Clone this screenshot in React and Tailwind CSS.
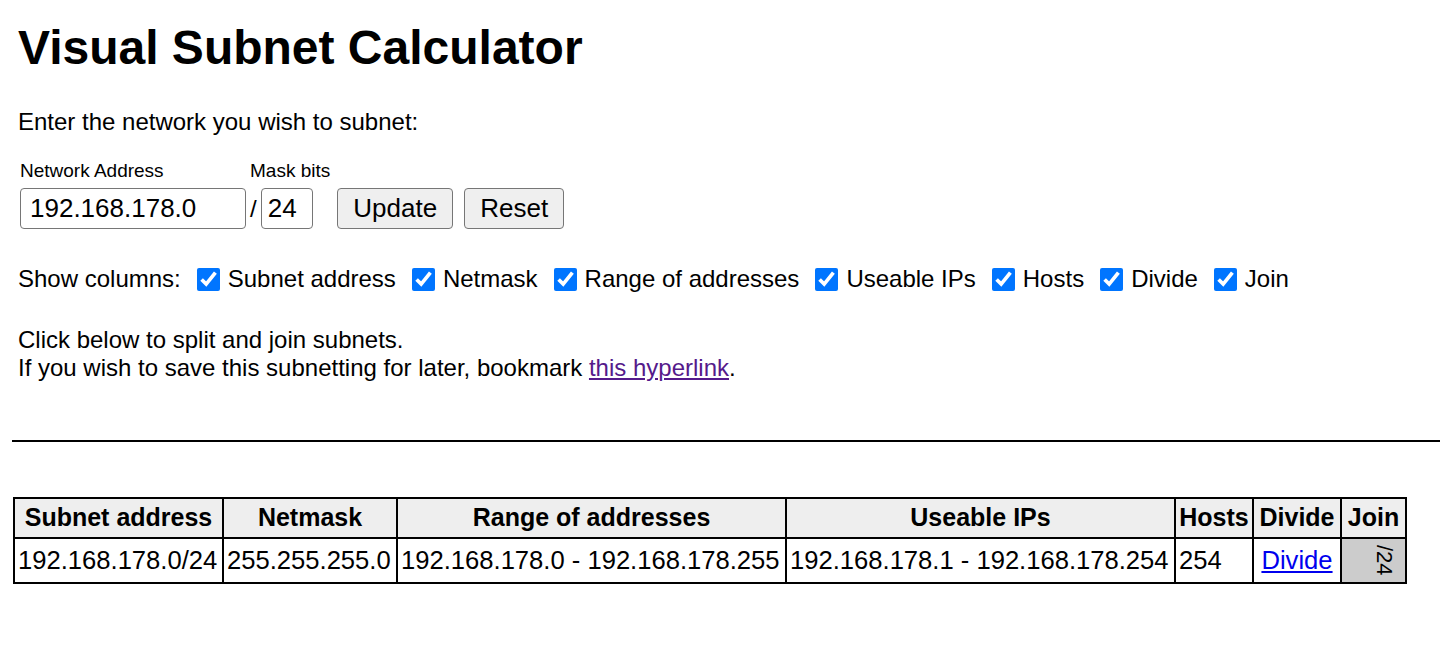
import React from 'react';

const columns = [
  ['Subnet address', 209],
  ['Netmask', 174],
  ['Range of addresses', 389],
  ['Useable IPs', 389],
  ['Hosts', 78],
  ['Divide', 88],
  ['Join', 65],
];

const Check = ({ label }) => (
  <label className="flex items-center ml-[16px]">
    <input type="checkbox" defaultChecked className="w-[23px] h-[23px] m-0 mr-[8px] accent-[#0075ff]" />
    <span>{label}</span>
  </label>
);

const App = () => (
  <div className="min-h-screen bg-white text-black flex flex-col pl-[12px] font-['Liberation_Sans',Arial,sans-serif]">
    <h1 className="mt-[20px] pl-[6px] text-[48px] leading-[56px] font-bold">Visual Subnet Calculator</h1>

    <p className="mt-[32px] pl-[6px] text-[24px] leading-[28px]">Enter the network you wish to subnet:</p>

    <form className="mt-[24px] pl-[8px] flex items-end" onSubmit={(e) => e.preventDefault()}>
      <div className="flex flex-col">
        <span className="text-[19px] leading-[22px] mb-[6px]">Network Address</span>
        <input
          type="text"
          defaultValue="192.168.178.0"
          className="w-[226px] h-[41px] px-[9px] text-[26px] border border-[#767676] rounded-[4px]"
        />
      </div>
      <div className="flex flex-col ml-[4px]">
        <span className="text-[19px] leading-[22px] mb-[6px]">Mask bits</span>
        <div className="flex items-center">
          <span className="text-[24px] mr-[4px]">/</span>
          <input
            type="text"
            defaultValue="24"
            className="w-[52px] h-[41px] px-[6px] text-[26px] border border-[#767676] rounded-[4px]"
          />
        </div>
      </div>
      <button className="ml-[7px] w-[116px] h-[41px] text-[26px] bg-[#efefef] border border-[#767676] rounded-[4px]">Update</button>
      <button className="ml-[11px] w-[100px] h-[41px] text-[26px] bg-[#efefef] border border-[#767676] rounded-[4px]">Reset</button>
    </form>

    <div className="mt-[36px] pl-[6px] h-[28px] flex items-center text-[24px]">
      <span>Show columns:</span>
      {columns.map(([name]) => (
        <Check key={name} label={name} />
      ))}
    </div>

    <div className="mt-[33px] pl-[6px] text-[24px] leading-[28px]">
      <p>Click below to split and join subnets.</p>
      <p>
        If you wish to save this subnetting for later, bookmark{' '}
        <a href="#" className="text-[#551a8b] underline">this hyperlink</a>.
      </p>
    </div>

    <hr className="mt-[58px] border-0 border-t-2 border-black" />

    <table className="mt-[55px] ml-[1px] w-[1392px] table-fixed border-collapse border-2 border-black text-[25.6px]">
      <colgroup>
        {columns.map(([name, w]) => (
          <col key={name} style={{ width: w }} />
        ))}
      </colgroup>
      <thead>
        <tr className="h-[39px]">
          {columns.map(([name]) => (
            <th key={name} className="border-2 border-black bg-[#eeeeee] font-bold text-center p-0 whitespace-nowrap text-[25px]">
              {name}
            </th>
          ))}
        </tr>
      </thead>
      <tbody>
        <tr className="h-[45px]">
          <td className="border-2 border-black px-[3px] whitespace-nowrap">192.168.178.0/24</td>
          <td className="border-2 border-black px-[3px] whitespace-nowrap">255.255.255.0</td>
          <td className="border-2 border-black px-[3px] whitespace-nowrap">192.168.178.0 - 192.168.178.255</td>
          <td className="border-2 border-black px-[3px] whitespace-nowrap">192.168.178.1 - 192.168.178.254</td>
          <td className="border-2 border-black px-[3px] whitespace-nowrap">254</td>
          <td className="border-2 border-black px-[3px] text-center">
            <a href="#" className="text-[#0000ee] underline">Divide</a>
          </td>
          <td className="border-2 border-black bg-[#cccccc] p-0">
            <div className="flex justify-end pr-[10px]">
              <span className="[writing-mode:vertical-rl] text-[22px] leading-[22px]">/24</span>
            </div>
          </td>
        </tr>
      </tbody>
    </table>
  </div>
);

export default App;
